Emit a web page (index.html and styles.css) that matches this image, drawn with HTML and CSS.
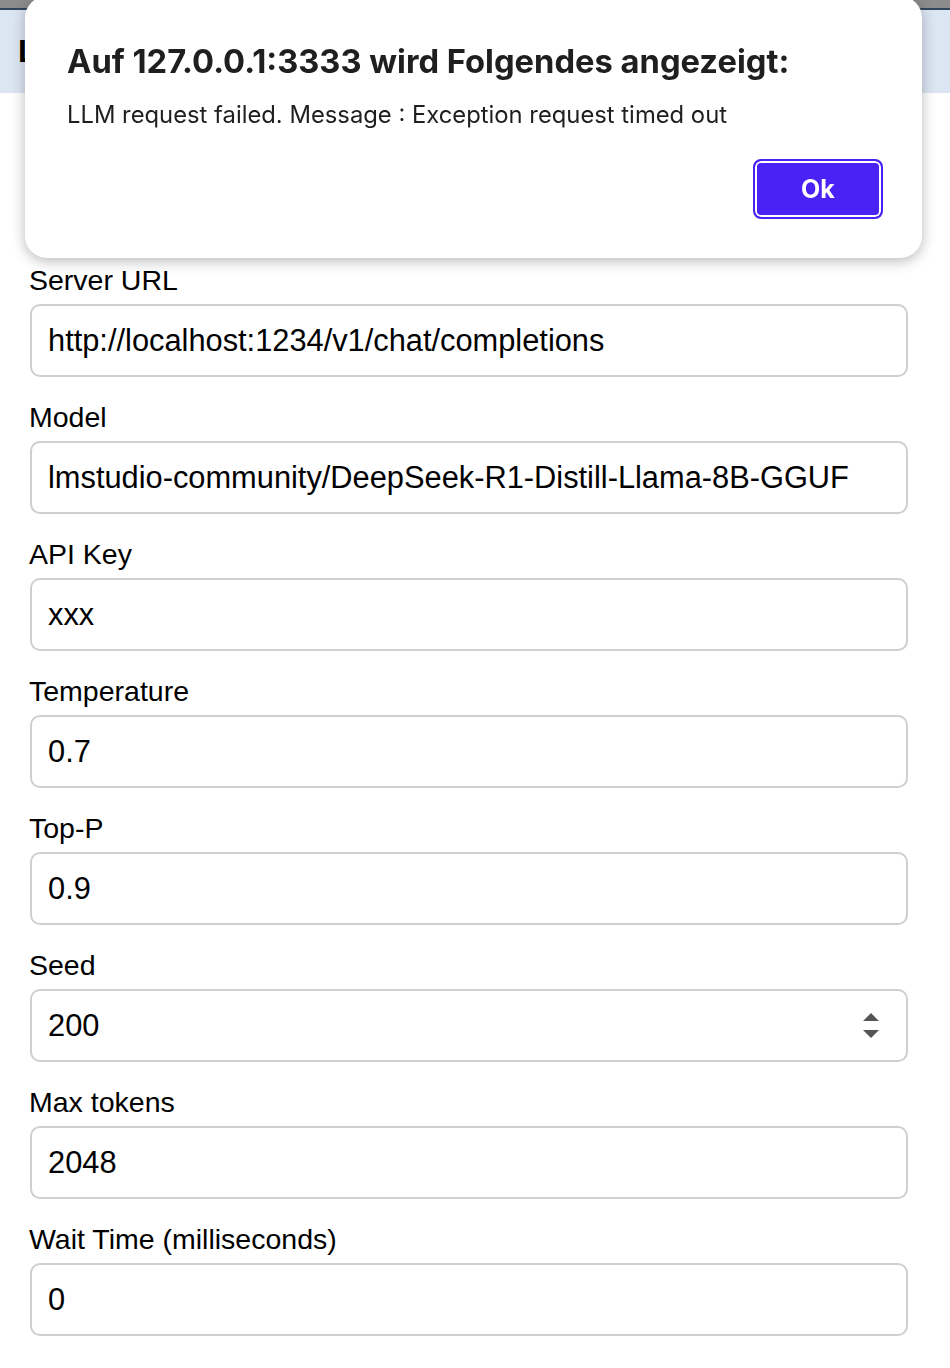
FILE: index.html
```html
<!DOCTYPE html>
<html>
<head>
<meta charset="utf-8">
<link rel="stylesheet" href="styles.css">
</head>
<body>
<div class="topstrip"></div>
<header class="header"><h1 class="title">LLM Settings</h1></header>
<main class="form">
  <div class="field"><label class="label">Server URL</label><div class="box"><input class="inp" value="http://localhost:1234/v1/chat/completions"></div></div>
  <div class="field"><label class="label">Model</label><div class="box"><input class="inp" value="lmstudio-community/DeepSeek-R1-Distill-Llama-8B-GGUF"></div></div>
  <div class="field"><label class="label">API Key</label><div class="box"><input class="inp" value="xxx"></div></div>
  <div class="field"><label class="label">Temperature</label><div class="box"><input class="inp" value="0.7"></div></div>
  <div class="field"><label class="label">Top-P</label><div class="box"><input class="inp" value="0.9"></div></div>
  <div class="field"><label class="label">Seed</label><div class="box"><input class="inp" value="200">
    <svg class="spin" width="18" height="26" viewBox="0 0 18 26"><path d="M9 0 L17 8 L1 8 Z M1 17 L17 17 L9 25 Z" fill="#555"/></svg></div></div>
  <div class="field"><label class="label">Max tokens</label><div class="box"><input class="inp" value="2048"></div></div>
  <div class="field"><label class="label">Wait Time (milliseconds)</label><div class="box"><input class="inp" value="0"></div></div>
</main>
<div class="dialog">
  <h2 class="dtitle">Auf 127.0.0.1:3333 wird Folgendes angezeigt:</h2>
  <p class="dmsg">LLM request failed. Message : Exception request timed out</p>
  <div class="dactions"><button class="okbtn">Ok</button></div>
</div>
</body>
</html>
```
FILE: styles.css
```css
html, body { margin: 0; padding: 0; }
body { background: #ffffff; font-family: "Liberation Sans", Arial, sans-serif; color: #000; width: 950px; height: 1368px; overflow: hidden; }
.topstrip { height: 8px; background: #8c8c8c; border-bottom: 2px solid #33475b; }
.header { height: 83px; background: #dce6f3; display: flex; align-items: center; padding-left: 18px; }
.title { margin: 0; font-size: 32px; font-weight: 700; color: #000; white-space: nowrap; }
.form { padding: 172px 42px 0 29px; }
.field { margin-bottom: 25px; }
.label { display: block; font-size: 28.5px; line-height: 30px; margin-bottom: 9px; color: #000; }
.box { margin-left: 1px; height: 73px; box-sizing: border-box; border: 2px solid #cfcfcf; border-radius: 10px; background: #fff; display: flex; align-items: center; padding: 0 26px 0 16px; }
.inp { flex: 1; border: none; outline: none; background: transparent; font-family: "Liberation Sans", Arial, sans-serif; font-size: 30.8px; color: #000; padding: 0; margin: 0; min-width: 0; }
.spin { flex: none; }
.dialog { position: fixed; left: 25px; top: -4px; width: 897px; height: 262px; box-sizing: border-box; background: #fff; border-radius: 22px; box-shadow: 0 3px 14px rgba(0,0,0,0.28); padding: 46px 42px 0 42px; font-family: Inter, "Open Sans", sans-serif; }
.dtitle { margin: 0; font-size: 32.7px; line-height: 38px; font-weight: 700; color: #1f1f1f; }
.dmsg { margin: 20px 0 0 0; font-size: 23.8px; line-height: 30px; color: #1f1f1f; }
.dactions { display: flex; justify-content: flex-end; margin-top: 29px; }
.okbtn { width: 130px; height: 60px; margin-right: -3px; border: 2px solid #4a22f5; box-shadow: inset 0 0 0 2px #fff; background: #4a22f5; border-radius: 8px; color: #fff; font-family: Inter, "Open Sans", sans-serif; font-weight: 700; font-size: 25px; }
```
